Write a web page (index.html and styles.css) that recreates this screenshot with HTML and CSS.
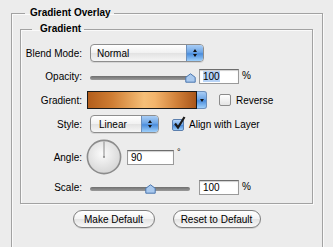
FILE: index.html
```html
<!DOCTYPE html>
<html lang="en">
<head>
    <meta charset="UTF-8">
    <title>Gradient Overlay</title>
    <link rel="stylesheet" href="styles.css">
</head>
<body>
<fieldset class="outer">
    <legend>Gradient Overlay</legend>

    <fieldset class="inner">
        <legend>Gradient</legend>

        <div class="row r-blend">
            <span class="label">Blend Mode:</span>
            <div class="select wide">
                <span class="value">Normal</span>
                <span class="stepper"><i class="up"></i><i class="down"></i></span>
            </div>
        </div>

        <div class="row r-opacity">
            <span class="label">Opacity:</span>
            <div class="slider">
                <div class="track"></div>
                <svg class="thumb" style="left: 100px" width="11" height="10" viewBox="0 0 11 10">
                    <path d="M5.5 0.8 L10.2 4.3 L10.2 9.2 L0.8 9.2 L0.8 4.3 Z" fill="#a9c9ee" stroke="#4a76ad" stroke-width="1"/>
                </svg>
            </div>
            <div class="field"><span class="sel">100</span></div>
            <span class="unit">%</span>
        </div>

        <div class="row r-gradient">
            <span class="label">Gradient:</span>
            <div class="swatch">
                <div class="ramp"></div>
                <div class="drop"><i class="down"></i></div>
            </div>
            <span class="check"></span>
            <span class="check-text">Reverse</span>
        </div>

        <div class="row r-style">
            <span class="label">Style:</span>
            <div class="select narrow">
                <span class="value">Linear</span>
                <span class="stepper"><i class="up"></i><i class="down"></i></span>
            </div>
            <span class="check on">
                <svg width="15" height="15" viewBox="0 0 15 15">
                    <path d="M3 7.5 L6 11.5 L12.5 1" fill="none" stroke="#1b1b1b" stroke-width="2.2"/>
                </svg>
            </span>
            <span class="check-text">Align with Layer</span>
        </div>

        <div class="row r-angle">
            <span class="label">Angle:</span>
            <svg class="dial" width="36" height="36" viewBox="0 0 36 36">
                <defs>
                    <radialGradient id="dialfill" cx="45%" cy="40%" r="60%">
                        <stop offset="0" stop-color="#fbfbfb"/>
                        <stop offset="1" stop-color="#d6d6d6"/>
                    </radialGradient>
                </defs>
                <circle cx="18" cy="18" r="16.6" fill="url(#dialfill)" stroke="#8c8c8c" stroke-width="1.6"/>
                <line x1="18" y1="18" x2="18" y2="2.5" stroke="#8a8a8a" stroke-width="1"/>
                <circle cx="18" cy="18" r="1" fill="#8a8a8a"/>
            </svg>
            <div class="field angle">90</div>
            <span class="deg">°</span>
        </div>

        <div class="row r-scale">
            <span class="label">Scale:</span>
            <div class="slider">
                <div class="track"></div>
                <svg class="thumb" style="left: 60px" width="11" height="10" viewBox="0 0 11 10">
                    <path d="M5.5 0.8 L10.2 4.3 L10.2 9.2 L0.8 9.2 L0.8 4.3 Z" fill="#a9c9ee" stroke="#4a76ad" stroke-width="1"/>
                </svg>
            </div>
            <div class="field">100</div>
            <span class="unit">%</span>
        </div>
    </fieldset>

    <div class="buttons">
        <span class="button make">Make Default</span>
        <span class="button reset">Reset to Default</span>
    </div>
</fieldset>
</body>
</html>
```

FILE: styles.css
```css
body {
    margin: 0;
    height: 247px;
    overflow: hidden;
    background-color: #ececec;
    font-family: "Liberation Sans", Arial, sans-serif;
    font-size: 10px;
    color: #000;
}

fieldset {
    border: 1px solid #a2a2a2;
    box-shadow: inset 1px 1px 0 #fafafa, 1px 1px 0 #fafafa;
    min-width: 0;
}

legend {
    font-weight: bold;
    line-height: 14px;
    font-size: 10px;
}

.outer {
    margin: 6px 10px 0 11px;
    padding: 2px 9px 0 8px;
    height: 250px;
    box-sizing: border-box;
}

.outer > legend {
    margin-left: 5px;
    padding: 0 3px 0 5px;
}

.inner {
    margin: 0;
    padding: 8px 0 8px 0;
}

.inner > legend {
    margin-left: 11px;
    padding: 0 3px 0 8px;
}

/* rows */

.row {
    display: flex;
    align-items: center;
}

.label {
    width: 61px;
    text-align: right;
    flex: none;
}

.r-blend { height: 18px; }
.r-opacity { height: 15px; margin-top: 7px; }
.r-gradient { height: 18px; margin-top: 7px; }
.r-style { height: 18px; margin-top: 6px; }
.r-angle { height: 36px; margin-top: 6px; }
.r-scale { height: 15px; margin-top: 5px; }

/* popup menus */

.select {
    margin-left: 8px;
    height: 18px;
    box-sizing: border-box;
    border: 1px solid #8e8e8e;
    border-radius: 4px;
    background: linear-gradient(#ffffff, #f1f1f1 50%, #e2e2e2 51%, #f6f6f6);
    display: flex;
    align-items: center;
    overflow: hidden;
    box-shadow: 0 1px 0 #d6d6d6;
}

.select.wide { width: 114px; }
.select.narrow { width: 69px; }

.select .value {
    flex: 1;
    padding-left: 6px;
}

.select.narrow .value { padding-left: 8px; }

.stepper {
    width: 16px;
    height: 100%;
    background: linear-gradient(#a9cdf5, #6ea6e6 45%, #4b8ddc 55%, #9fd0fb);
    border-left: 1px solid #6c8fbb;
    display: flex;
    flex-direction: column;
    align-items: center;
    justify-content: center;
    gap: 2px;
}

.up, .down {
    display: block;
    width: 0;
    height: 0;
    border-left: 2.5px solid transparent;
    border-right: 2.5px solid transparent;
}

.up { border-bottom: 3px solid #111; }
.down { border-top: 3px solid #111; }

/* sliders */

.slider {
    position: relative;
    margin-left: 8px;
    width: 100px;
    height: 12px;
    margin-right: 9px;
}

.track {
    margin-top: 5px;
    height: 4px;
    border-radius: 2px;
    background: linear-gradient(#6f6f6f, #9a9a9a);
}

.thumb {
    position: absolute;
    top: 2px;
    margin-left: -5px;
}

/* text fields */

.field {
    width: 40px;
    height: 15px;
    box-sizing: border-box;
    background: #fff;
    border: 1px solid #9a9a9a;
    border-top-color: #6d6d6d;
    box-shadow: inset 0 1px 1px #cfcfcf;
    padding-left: 3px;
    line-height: 13px;
}

.field.angle {
    width: 47px;
    margin-left: 5px;
    padding-left: 3px;
}

.sel {
    background-color: #b7d3f6;
}

.unit {
    margin-left: 3px;
    margin-top: -2px;
}

.deg {
    margin-left: 3px;
    align-self: flex-start;
    margin-top: 8px;
    font-size: 9px;
}

/* gradient swatch */

.swatch {
    margin-left: 5px;
    width: 120px;
    height: 18px;
    display: flex;
}

.ramp {
    flex: 1;
    border: 1px solid #1a1a1a;
    background: linear-gradient(to right, #b35e1c 0%, #cf7d33 22%, #f6bf78 52%, #f3b46c 62%, #d1813a 82%, #a9561a 100%);
}

.drop {
    width: 9px;
    background: linear-gradient(#a9cdf5, #6ea6e6 45%, #4b8ddc 55%, #9fd0fb);
    border: 1px solid #6c8fbb;
    border-left: none;
    border-radius: 0 3px 3px 0;
    display: flex;
    align-items: center;
    justify-content: center;
}

/* checkboxes */

.check {
    position: relative;
    width: 12px;
    height: 12px;
    box-sizing: border-box;
    border: 1px solid #8b8b8b;
    border-radius: 2px;
    background: linear-gradient(#ffffff, #e4e4e4);
    margin-left: 12px;
    flex: none;
}

.r-style .check { margin-left: 13px; margin-top: 2px; }

.check.on {
    background: linear-gradient(#b6d6fa, #6ca5e8 50%, #4b8cdc 55%, #9ccefa);
    border-color: #5b7fae;
}

.check svg {
    position: absolute;
    left: -1px;
    top: -4px;
}

.check-text {
    margin-left: 5px;
}

.dial {
    margin-left: 4px;
    flex: none;
}

/* buttons */

.buttons {
    display: flex;
    justify-content: center;
    gap: 18px;
    margin-top: 6px;
}

.button {
    height: 18px;
    box-sizing: border-box;
    border: 1px solid #7e7e7e;
    border-radius: 9px;
    background: linear-gradient(#ffffff, #f3f3f3 50%, #e3e3e3 51%, #f8f8f8);
    box-shadow: 0 1px 0 #d2d2d2;
    display: flex;
    align-items: center;
    justify-content: center;
}

.make { width: 82px; }
.reset { width: 88px; }
```
